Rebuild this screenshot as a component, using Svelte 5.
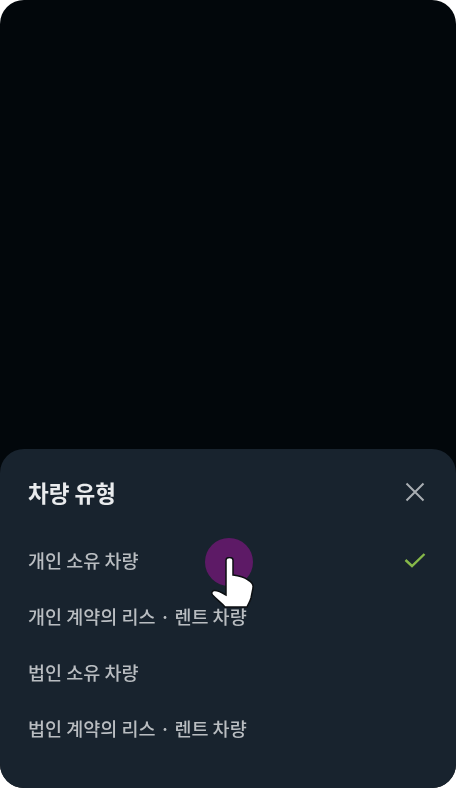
<script>
  const options = [
    { label: '개인 소유 차량', selected: true },
    { label: '개인 계약의 리스 · 렌트 차량', selected: false },
    { label: '법인 소유 차량', selected: false },
    { label: '법인 계약의 리스 · 렌트 차량', selected: false }
  ];
</script>

<div class="screen">
  <div class="backdrop"></div>
  <section class="sheet">
    <header class="head">
      <h2>차량 유형</h2>
      <svg class="close" viewBox="0 0 20 20" aria-label="닫기">
        <path d="M1.5 1.5 18.5 18.5M18.5 1.5 1.5 18.5" />
      </svg>
    </header>
    <ul>
      {#each options as o}
        <li>
          <span>{o.label}</span>
          {#if o.selected}
            <svg class="check" viewBox="0 0 22 16"><path d="M1.5 8 8 14 20.5 2" /></svg>
          {/if}
        </li>
      {/each}
    </ul>
    <div class="touch">
      <div class="dot"></div>
      <svg class="hand" viewBox="0 0 43 52">
        <path d="M15 3C15 1 17 .5 18.500 .5S22 1 22 3V18C27 18.500 33 20 37 23C41 25 42.500 28 42 31L40 41C39 45 37 47 36 50L14 50C11 46 6 43 1.500 38C0 36 1 34 3 33.500C6 33 10 35 15 38Z" />
      </svg>
    </div>
  </section>
</div>

<style>
  :global(body) { margin: 0; background: #fff; }
  .screen {
    width: 456px;
    height: 788px;
    display: flex;
    flex-direction: column;
    background: #02070b;
    border-radius: 24px;
    overflow: hidden;
    position: relative;
  }
  .backdrop { flex: 1; }
  .sheet {
    position: relative;
    height: 339px;
    box-sizing: border-box;
    background: #18232e;
    border-radius: 24px 24px 0 0;
    padding: 23px 28px 0;
  }
  .head {
    display: flex;
    align-items: center;
    justify-content: space-between;
    height: 40px;
  }
  h2 {
    margin: 0;
    font: 700 22.500px/1 "Noto Sans CJK KR", sans-serif;
    color: #e9ebed;
    filter: blur(0.6px);
  }
  .close {
    width: 20px;
    height: 20px;
    margin-right: 3px;
    filter: blur(0.5px);
  }
  .close path { fill: none; stroke: #a9aeb3; stroke-width: 2; }
  ul { list-style: none; margin: 20px 0 0; padding: 0; }
  li {
    height: 56px;
    display: flex;
    align-items: center;
    justify-content: space-between;
    font: 500 18.500px/1 "Noto Sans CJK KR", sans-serif;
    color: #b9bdc1;
  }
  li span { filter: blur(0.6px); }
  .check {
    width: 22px;
    height: 16px;
    margin-right: 2px;
    filter: blur(0.4px);
  }
  .check path { fill: none; stroke: #86b849; stroke-width: 2.4; }
  .touch {
    position: absolute;
    left: 205px;
    top: 89px;
    width: 52px;
    height: 72px;
  }
  .dot {
    width: 48px;
    height: 48px;
    border-radius: 50%;
    background: #5d1a66;
  }
  .hand {
    position: absolute;
    left: 6px;
    top: 19px;
    width: 43px;
    height: 52px;
    filter: blur(0.5px);
  }
  .hand path { fill: #fff; stroke: #0c0f12; stroke-width: 1.500; }
</style>
